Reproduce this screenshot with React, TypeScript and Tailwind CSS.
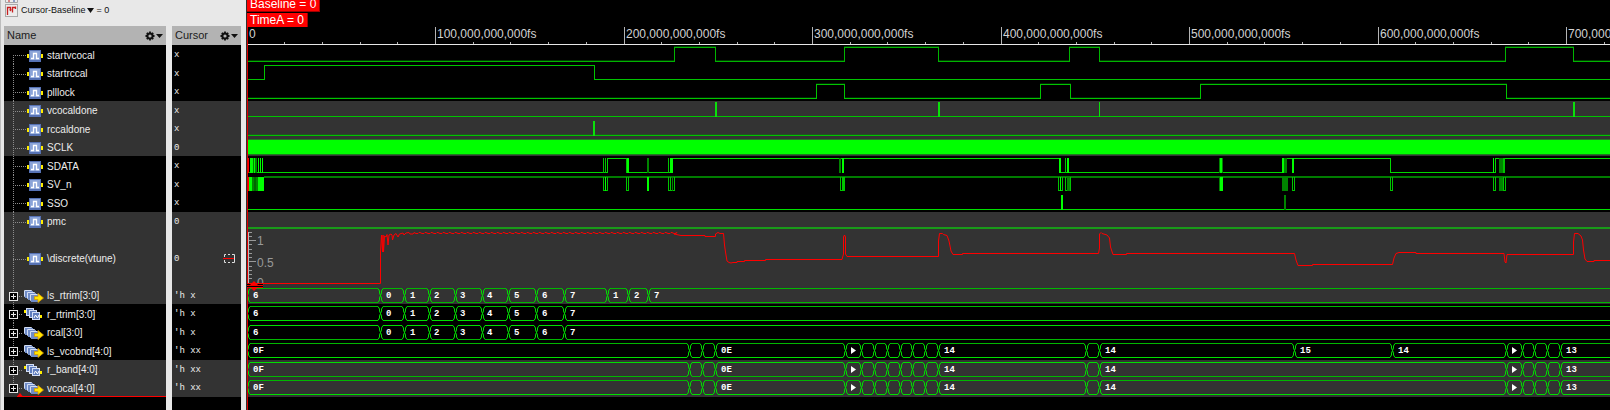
import React from 'react';
import { clsx } from 'clsx';

type IconKind = 'signal' | 'output' | 'register';

interface Burst {
  x: number;
  w: number;
  color: string;
}

interface Signal {
  name: string;
  cursor: string;
  icon: IconKind;
  dark: boolean;
  height: 18 | 19 | 56;
  wave: React.ReactNode;
}

const GREEN = '#00ff00';
const MID = '#00c400';
const DIM = '#008400';

// Time axis: x of the left edge of the wave panel and of the far end of the traces
const ORIGIN = 247;
const END = 4000;

// ---------- waveforms ----------

interface DigitalProps {
  top: number;
  edges?: number[];
  startHigh?: boolean;
  color?: string;
  halo?: string;
  bursts?: Burst[];
}

const Digital: React.FC<DigitalProps> = ({ top, edges = [], startHigh = false, color = MID, halo, bursts = [] }) => {
  const high = top + 0.5;
  const low = top + 14.5;
  let level = startHigh;
  let d = `M${ORIGIN} ${level ? high : low}`;
  edges.forEach((x) => {
    level = !level;
    d += `H${x + 0.5}V${level ? high : low}`;
  });
  d += `H${END}`;

  return (
    <g shapeRendering="crispEdges">
      {halo && <path d={d} fill="none" stroke={halo} strokeWidth="1" transform="translate(0 -1)" />}
      <path d={d} fill="none" stroke={color} strokeWidth="1" />
      {bursts.map((b, i) => (
        <rect key={i} x={b.x} y={top} width={b.w} height="15" fill={b.color} />
      ))}
    </g>
  );
};

interface BusProps {
  changes: number[];
  labels: [number, string][];
  bright?: 'top' | 'bottom';
}

const Bus: React.FC<BusProps> = ({ changes, labels, bright }) => {
  const stops = [ORIGIN, ...changes, END];
  return (
    <g>
      {stops.slice(0, -1).map((x, i) => {
        const next = stops[i + 1];
        return (
          <g key={x} fill="none" strokeWidth="1">
            <path d={`M${x + 3} 2.5H${next - 2}`} stroke={bright === 'top' ? '#00e000' : '#00b800'} />
            <path d={`M${x + 3} 16.5H${next - 2}`} stroke={bright === 'bottom' ? '#00e000' : '#00b800'} />
            <path d={`M${x + 3} 2.5L${x + 1.5} 5V7L${x + 0.5} 9.5L${x + 1.5} 12V14L${x + 3} 16.5`} stroke="#00e000" />
            {i > 0 && (
              <path d={`M${x - 2} 2.5L${x - 0.5} 5V7L${x + 0.5} 9.5L${x - 0.5} 12V14L${x - 2} 16.5`} stroke="#00e000" />
            )}
          </g>
        );
      })}
      {labels.map(([x, text]) =>
        text === '>' ? (
          <path key={x} d={`M${x} 6V13L${x + 5} 9.5Z`} fill="#fff" />
        ) : (
          <text key={x} x={x} y="12" fill="#fff" className="font-['Liberation_Mono'] text-[9px] font-bold">
            {text}
          </text>
        ),
      )}
    </g>
  );
};

const Analog: React.FC = () => {
  let ripple = '';
  for (let x = 414; x < 674; x += 6) {
    ripple += `L${x} 2.5L${x + 2} 3.5L${x + 4} 3.5L${x + 5} 2.5`;
  }
  const ticks = Array.from({ length: 13 }, (_, i) => 53 - i * 4.25);

  return (
    <g>
      <g stroke="#999" strokeWidth="1" shapeRendering="crispEdges">
        <path d="M248.5 2V54" stroke="#bbb" />
        {ticks.map((y, i) => (
          <path key={y} d={`M249 ${y}H${i % 5 === 0 ? 256 : 252}`} />
        ))}
      </g>
      <g fill="#999" className="font-['Liberation_Sans'] text-[12px]">
        <text x="257" y="15">1</text>
        <text x="257" y="37">0.5</text>
        <text x="257" y="57">0</text>
      </g>
      <path
        d={`M248 53.5H380.5V22L381.5 5L382.5 22L383 5L383.5 22L384.5 6L386 7L387 4.5L388 15L389 5L391 4L392 5L392.5 10L394 5L396 3.5L398 7L399.5 4L403 3L404 5L406 3L409 2.5L410 4L413 4${ripple}L674 4L681 5.5H705V6.5H715.5V4L718 2.5L720 3.5H723.5L724.5 15L725.5 22L727 31L729 32.5L731 33L733 32.5H737V31.5H744.5V30.5H765.5V29.5H842L843.5 24V7L844.5 5L845.5 7V24L847 26.5H938.5V11L939.5 3.5H942.5L943.5 4.5L947 5.5L949 11L951 21L953 24.5H962.5V23.5H1098.5L1099.5 18V4L1101 2.5L1102 3.5L1107 5L1109.5 8L1110.5 17L1113 24.5H1126.5V23.5H1294.5L1296 30L1298 35.5H1312.5V34.5H1392.5L1394 28L1396 23.5L1399 22.5H1416V23.5H1504L1505 32L1506 33L1507 24.5H1573.5V12L1574.5 3.5H1578L1581 6L1582.5 10L1583.5 20L1585 29L1587 31.5H1594V30.5H${END}`}
        fill="none"
        stroke="#ff0000"
        strokeWidth="1"
      />
    </g>
  );
};

const sdataBursts: Burst[] = [
  { x: 247, w: 2, color: '#ff0000' },
  { x: 250, w: 3, color: GREEN },
  { x: 253, w: 1, color: DIM },
  { x: 254, w: 1, color: GREEN },
  { x: 255, w: 2, color: DIM },
  { x: 258, w: 1, color: GREEN },
  { x: 260, w: 1, color: GREEN },
  { x: 262, w: 1, color: GREEN },
  { x: 603, w: 1, color: MID },
  { x: 605, w: 1, color: MID },
  { x: 626, w: 1, color: MID },
  { x: 627, w: 2, color: GREEN },
  { x: 647, w: 2, color: DIM },
  { x: 668, w: 1, color: MID },
  { x: 670, w: 3, color: GREEN },
  { x: 839, w: 2, color: DIM },
  { x: 842, w: 2, color: GREEN },
  { x: 1059, w: 2, color: GREEN },
  { x: 1065, w: 1, color: MID },
  { x: 1067, w: 2, color: GREEN },
  { x: 1219, w: 4, color: DIM },
  { x: 1220, w: 2, color: GREEN },
  { x: 1282, w: 2, color: GREEN },
  { x: 1284, w: 3, color: DIM },
  { x: 1292, w: 2, color: GREEN },
  { x: 1493, w: 1, color: GREEN },
  { x: 1499, w: 4, color: DIM },
  { x: 1503, w: 2, color: MID },
];

const svBursts: Burst[] = [
  { x: 247, w: 2, color: '#ff0000' },
  { x: 249, w: 3, color: GREEN },
  { x: 252, w: 6, color: DIM },
  { x: 254, w: 2, color: '#006400' },
  { x: 258, w: 6, color: GREEN },
  { x: 605, w: 1, color: GREEN },
  { x: 647, w: 2, color: GREEN },
  { x: 670, w: 1, color: MID },
  { x: 672, w: 1, color: DIM },
  { x: 842, w: 2, color: MID },
  { x: 1060, w: 1, color: GREEN },
  { x: 1067, w: 3, color: DIM },
  { x: 1219, w: 4, color: DIM },
  { x: 1220, w: 3, color: GREEN },
  { x: 1282, w: 6, color: DIM },
  { x: 1499, w: 4, color: DIM },
  { x: 1503, w: 1, color: MID },
];

// Low-going pulses of SV_n, as [start, end]
const svPulses = [
  [603, 607],
  [626, 628],
  [668, 674],
  [840, 844],
  [1058, 1062],
  [1065, 1070],
  [1282, 1287],
  [1292, 1294],
  [1390, 1392],
  [1493, 1495],
  [1499, 1505],
];

const trimChanges = [380, 404, 429, 455, 482, 508, 536, 564];
const trimLabels: [number, string][] = [
  [253, '6'],
  [386, '0'],
  [410, '1'],
  [434, '2'],
  [460, '3'],
  [487, '4'],
  [514, '5'],
  [542, '6'],
  [570, '7'],
];

const bandChanges = [689, 702, 715, 845, 861, 874, 887, 900, 912, 925, 938, 1086, 1099];
const bandTail = [1506, 1522, 1534, 1547, 1560];
const bandLabels: [number, string][] = [
  [253, '0F'],
  [721, '0E'],
  [851, '>'],
  [944, '14'],
  [1105, '14'],
  [1512, '>'],
  [1566, '13'],
];

const signals: Signal[] = [
  {
    name: 'startvcocal', cursor: 'x', icon: 'signal', dark: true, height: 19,
    wave: <Digital top={2} color="#00b400" halo="#003c00" edges={[674, 715, 844, 938, 1069, 1099, 1505, 1573]} />,
  },
  {
    name: 'startrccal', cursor: 'x', icon: 'signal', dark: true, height: 18,
    wave: <Digital top={1} edges={[264, 594]} />,
  },
  {
    name: 'plllock', cursor: 'x', icon: 'signal', dark: true, height: 19,
    wave: <Digital top={2} halo="#002800" edges={[816, 844, 1040, 1070, 1200, 1506]} />,
  },
  {
    name: 'vcocaldone', cursor: 'x', icon: 'signal', dark: false, height: 18,
    wave: (
      <Digital
        top={1}
        bursts={[
          { x: 715, w: 2, color: '#0be00b' },
          { x: 938, w: 2, color: '#0be00b' },
          { x: 1099, w: 1, color: '#0be00b' },
          { x: 1573, w: 2, color: '#0be00b' },
        ]}
      />
    ),
  },
  {
    name: 'rccaldone', cursor: 'x', icon: 'signal', dark: false, height: 19,
    wave: <Digital top={2} halo="#205220" bursts={[{ x: 593, w: 2, color: '#0be00b' }]} />,
  },
  {
    name: 'SCLK', cursor: '0', icon: 'signal', dark: false, height: 18,
    wave: (
      <g shapeRendering="crispEdges">
        <rect x={ORIGIN} y="1" width={END} height="16" fill="#1f7a1f" />
        <rect x={ORIGIN} y="2" width={END} height="14" fill={GREEN} />
      </g>
    ),
  },
  {
    name: 'SDATA', cursor: 'x', icon: 'signal', dark: true, height: 19,
    wave: <Digital top={2} color="#00d800" edges={[607, 628, 672, 1060, 1286, 1390, 1495]} bursts={sdataBursts} />,
  },
  {
    name: 'SV_n', cursor: 'x', icon: 'signal', dark: true, height: 18,
    wave: (
      <g shapeRendering="crispEdges">
        <rect x="264" y="1" width={END} height="2" fill="#007c00" />
        {svPulses.map(([a, b]) => (
          <path key={a} d={`M${a + 0.5} 2V15.5H${b + 0.5}V2`} fill="none" stroke={MID} />
        ))}
        {svBursts.map((b, i) => (
          <rect key={i} x={b.x} y="2" width={b.w} height="14" fill={b.color} />
        ))}
      </g>
    ),
  },
  {
    name: 'SSO', cursor: 'x', icon: 'signal', dark: true, height: 19,
    wave: (
      <Digital top={2} color="#00e000" bursts={[{ x: 1061, w: 2, color: GREEN }, { x: 1284, w: 2, color: DIM }]} />
    ),
  },
  {
    name: 'pmc', cursor: '0', icon: 'signal', dark: false, height: 18,
    wave: <rect x={ORIGIN} y="15" width={END} height="2" fill="#199919" />,
  },
  { name: '\\discrete(vtune)', cursor: '0', icon: 'signal', dark: false, height: 56, wave: <Analog /> },
  {
    name: 'ls_rtrim[3:0]', cursor: "'h x", icon: 'output', dark: false, height: 18,
    wave: (
      <Bus changes={[...trimChanges, 607, 628, 648]} labels={[...trimLabels, [613, '1'], [634, '2'], [654, '7']]} />
    ),
  },
  {
    name: 'r_rtrim[3:0]', cursor: "'h x", icon: 'register', dark: true, height: 19,
    wave: <Bus changes={trimChanges} labels={trimLabels} bright="bottom" />,
  },
  {
    name: 'rcal[3:0]', cursor: "'h x", icon: 'output', dark: true, height: 18,
    wave: <Bus changes={trimChanges} labels={trimLabels} bright="top" />,
  },
  {
    name: 'ls_vcobnd[4:0]', cursor: "'h xx", icon: 'output', dark: true, height: 19,
    wave: (
      <Bus
        changes={[...bandChanges, 1294, 1392, ...bandTail]}
        labels={[...bandLabels, [1300, '15'], [1398, '14']]}
        bright="bottom"
      />
    ),
  },
  {
    name: 'r_band[4:0]', cursor: "'h xx", icon: 'register', dark: false, height: 18,
    wave: <Bus changes={[...bandChanges, ...bandTail]} labels={bandLabels} bright="top" />,
  },
  {
    name: 'vcocal[4:0]', cursor: "'h xx", icon: 'output', dark: false, height: 19,
    wave: <Bus changes={[...bandChanges, ...bandTail]} labels={bandLabels} bright="bottom" />,
  },
];

const rowHeight = { 18: 'h-[18px]', 19: 'h-[19px]', 56: 'h-[56px]' };

// ---------- icons ----------

const Gear: React.FC = () => (
  <svg width="18" height="10" viewBox="0 0 18 10" aria-hidden="true">
    <circle cx="5" cy="5" r="2.6" fill="none" stroke="#111" strokeWidth="2" />
    <path
      d="M5 .5V2.200M5 7.800V9.500M.5 5H2.200M7.800 5H9.500M1.800 1.800L3 3M7 7L8.200 8.200M8.200 1.800L7 3M3 7L1.800 8.200"
      stroke="#111"
      strokeWidth="1.800"
    />
    <path d="M11 3H18L14.500 7Z" fill="#111" />
  </svg>
);

// Dotted branch of the signal tree, with the expander box on bus rows
const Branch: React.FC<{ height: number; first: boolean; last: boolean; bus: boolean }> = ({
  height,
  first,
  last,
  bus,
}) => {
  const mid = Math.floor(height / 2) + 1;
  return (
    <svg width={bus ? 18 : 22} height={height} className="block" aria-hidden="true">
      <g stroke="#8c8c8c" strokeDasharray="1 1" shapeRendering="crispEdges">
        <path d={`M9.500 ${first ? mid : 0}V${last ? mid : height}`} />
        <path d={`M9 ${mid + 0.5}H24`} />
      </g>
      {bus && (
        <g stroke="#e6e6e6" shapeRendering="crispEdges">
          <rect x="5.500" y={mid - 3.5} width="8" height="8" fill="#000" />
          <path d={`M7 ${mid + 0.5}H12M9.500 ${mid - 2}V${mid + 3}`} />
        </g>
      )}
    </svg>
  );
};

const SignalIcon: React.FC = () => (
  <svg width="18" height="12" viewBox="0 0 18 12" aria-hidden="true">
    <path d="M1 4H3.500V8H1ZM14.500 4H17V8H14.500Z" fill="#ffee00" />
    <rect x="3" y="0" width="12" height="12" fill="#5672b4" />
    <rect x="4" y="1" width="10" height="9" fill="#8ba4d8" />
    <path d="M5 8.500H7.500V3.500H10.500V8.500H13" fill="none" stroke="#fff" strokeWidth="1.300" />
  </svg>
);

const OutputIcon: React.FC = () => (
  <svg width="22" height="13" viewBox="0 0 22 13" aria-hidden="true">
    {[0, 1, 2].map((i) => (
      <g key={i}>
        <rect x={2 + i * 3} y={i * 2} width="8" height="7" rx="1" fill="#d3def5" />
        <rect x={3 + i * 3} y={1 + i * 2} width="8" height="7" fill="#6f8cc8" />
      </g>
    ))}
    <path d="M12.500 6.500H16V3.500L21.500 8L16 12.500V9.500H12.500Z" fill="#ffe600" stroke="#d89a00" strokeWidth=".8" />
  </svg>
);

const RegisterIcon: React.FC = () => (
  <svg width="22" height="13" viewBox="0 0 22 13" aria-hidden="true">
    <path d="M2 2H5V5H2ZM5 5H7V8H5ZM8 7H10V10H8ZM18 7H20V10H18Z" fill="#ffee00" />
    {[0, 1, 2].map((i) => (
      <rect key={i} x={4.5 + i * 3} y={0.5 + i * 2} width="7" height="7" fill="#5f7dbd" stroke="#d3def5" strokeWidth="1" />
    ))}
    <path d="M12 10L13.500 7L15.500 10L17 7" fill="none" stroke="#fff" strokeWidth="1" />
  </svg>
);

const RangeIcon: React.FC = () => (
  <svg width="13" height="9" viewBox="0 0 13 9" className="shrink-0" aria-hidden="true">
    <path d="M3 .5H1.500V3M1.500 6V8.500H3M5 .5H7M5 8.500H7M9 .5H11.500V8.500H9" fill="none" stroke="#ddd" />
    <path d="M0 4.500H11" stroke="#f00" />
  </svg>
);

const CursorIcon: React.FC = () => (
  <svg width="13" height="13" viewBox="0 0 13 13" aria-hidden="true">
    <rect x=".5" y=".5" width="12" height="12" fill="#ececec" stroke="#a8a8a8" />
    <path d="M2.500 11V3.500H5.500V6.500M10.500 3.500H7.500V8.500M10.500 2.500V5" fill="none" stroke="#c82020" strokeWidth="1.300" />
    <path d="M4 5.500L5.500 7.500L7 5.500" fill="#c82020" />
  </svg>
);

const icons = { signal: <SignalIcon />, output: <OutputIcon />, register: <RegisterIcon /> };

// ---------- panels ----------

const SignalTable: React.FC = () => (
  <table className="w-full table-fixed text-left">
    <colgroup>
      <col className="w-[162px]" />
      <col className="w-[6px]" />
      <col />
    </colgroup>
    <thead>
      <tr className="h-[19px] text-[11px] text-[#1c1c1c]">
        <th className="bg-[#b3b3b3] p-0 font-normal">
          <div className="flex items-center justify-between pr-[3px] pl-[3px]">
            Name
            <button aria-label="Name column options"><Gear /></button>
          </div>
        </th>
        <th className="p-0" aria-hidden="true" />
        <th className="bg-[#b3b3b3] p-0 font-normal">
          <div className="flex items-center justify-between pr-[3px] pl-[3px]">
            Cursor
            <button aria-label="Cursor column options"><Gear /></button>
          </div>
        </th>
      </tr>
    </thead>
    <tbody className="text-[10px] leading-[14px] text-[#ececec]">
      {signals.map((s, i) => {
        const bus = s.icon !== 'signal';
        const branch = <Branch height={s.height} first={i === 0} last={i === signals.length - 1} bus={bus} />;
        return (
          <tr key={s.name} className={rowHeight[s.height]}>
            <td className={clsx('p-0', s.dark ? 'bg-black' : 'bg-[#333333]')}>
              <div className="flex items-center">
                {bus ? <button aria-label={`Expand ${s.name}`}>{branch}</button> : branch}
                <div className="flex items-center pt-0.5">
                  <span className={clsx('flex shrink-0', bus ? 'w-[25px]' : 'w-[21px]')}>{icons[s.icon]}</span>
                  <span className="whitespace-nowrap">{s.name}</span>
                </div>
              </div>
            </td>
            <td className="p-0" />
            <td className={clsx('p-0', s.dark ? 'bg-black' : 'bg-[#333333]')}>
              <div className="flex items-center justify-between pt-px pr-[5px] pl-0.5 font-['Liberation_Mono'] text-[9px] whitespace-pre">
                {s.cursor}
                {s.height === 56 && <RangeIcon />}
              </div>
            </td>
          </tr>
        );
      })}
    </tbody>
  </table>
);

const TimeAxis: React.FC = () => {
  const majors = [0, 1, 2, 3, 4, 5, 6, 7];
  const step = 188.5;
  return (
    <svg width="100%" height="18" className="block">
      <g transform={`translate(-${ORIGIN} 0)`}>
        <g stroke="#b4b4b4" shapeRendering="crispEdges">
          {majors.map((m) => (
            <g key={m}>
              {m > 0 && <path d={`M${Math.floor(247 + m * step) + 0.5} 0V17`} />}
              {[1, 2, 3, 4].map((n) => (
                <path key={n} d={`M${Math.floor(247 + (m + n / 5) * step) + 0.5} 15V17`} />
              ))}
            </g>
          ))}
          <path d={`M${ORIGIN} 17.500H${END}`} stroke="#e6e6e6" />
        </g>
        <g fill="#d2d2d2" className="font-['Liberation_Sans'] text-[12px]">
          {majors.map((m) => (
            <text key={m} x={Math.floor(249 + m * step)} y="11">
              {m === 0 ? '0' : `${m}00,000,000,000fs`}
            </text>
          ))}
        </g>
      </g>
    </svg>
  );
};

const WavePanel: React.FC = () => (
  <section className="relative min-w-0 flex-1 overflow-hidden bg-black" aria-label="Waveforms">
    <div className="flex flex-col items-start gap-px text-[12px] leading-[14px] text-white">
      <div className="flex h-[12px] items-end border-r border-b border-[#a00000] bg-[#ff0000] pr-[3px] pl-[3px]">
        <span>Baseline = 0</span>
      </div>
      <div className="h-[14px] border-r border-[#a00000] bg-[#ff0000] pr-[3px] pl-[3px]">TimeA = 0</div>
    </div>
    <TimeAxis />
    {signals.map((s) => (
      <div key={s.name} className={clsx(rowHeight[s.height], s.dark ? 'bg-black' : 'bg-[#333333]')}>
        <svg width="100%" height={s.height} className="block">
          <g transform={`translate(-${ORIGIN} 0)`}>{s.wave}</g>
        </svg>
      </div>
    ))}

    {/* Time cursor and the zero marker of the analog trace */}
    <div className="absolute top-[27px] bottom-0 left-0 w-px bg-[#e00000]" />
    <svg width="16" height="10" viewBox="0 0 16 10" className="absolute top-[281px] left-0" aria-hidden="true">
      <rect y="3" width="16" height="4" fill="#000" />
      <path d="M0 4.500H16M0 6.500H16" stroke="#f00000" />
      <path d="M3 4L7 0L11 4ZM3 6L7 10L11 6Z" fill="#ff0000" />
    </svg>
  </section>
);

export default function App() {
  return (
    <main className="flex min-h-screen bg-black font-['Liberation_Sans',sans-serif]">
      <section className="flex w-[247px] shrink-0 flex-col border-r border-l border-r-[#303030] border-l-[#bdbdbd] bg-[#e8e8e8] pr-[5px] pl-[3px]">
        <div className="flex h-[26px] flex-col overflow-hidden">
          <div className="flex h-[4px] shrink-0 items-start">
            <svg width="13" height="3" viewBox="0 0 13 3" className="ml-px" aria-hidden="true">
              <path d="M.5 0V2.500H12.500V0" fill="#ececec" stroke="#a8a8a8" />
              <path d="M3 1H5" stroke="#c82020" />
              <path d="M8 1H10" stroke="#3050a0" />
            </svg>
          </div>
          <div className="ml-px flex h-[13px] items-center gap-[3px] text-[9px] text-[#111111]">
            <CursorIcon />
            <button className="flex items-center gap-px">
              Cursor-Baseline
              <svg width="7" height="5" viewBox="0 0 7 5" aria-hidden="true">
                <path d="M0 0H7L3.500 5Z" fill="#111" />
              </svg>
            </button>
            <span>= 0</span>
          </div>
        </div>
        <SignalTable />
        <div className="flex flex-1 gap-[6px]">
          <div className="relative w-[162px] bg-black">
            {/* Insertion mark below the last signal */}
            <svg width="149" height="4" viewBox="0 0 149 4" className="absolute -top-1 right-0" aria-hidden="true">
              <path d="M0 3.500H149" stroke="#ff0000" />
              <path d="M0 3.500L3 0L6 3.500Z" fill="#ff0000" />
            </svg>
          </div>
          <div className="flex-1 bg-black" />
        </div>
      </section>
      <WavePanel />
    </main>
  );
}
